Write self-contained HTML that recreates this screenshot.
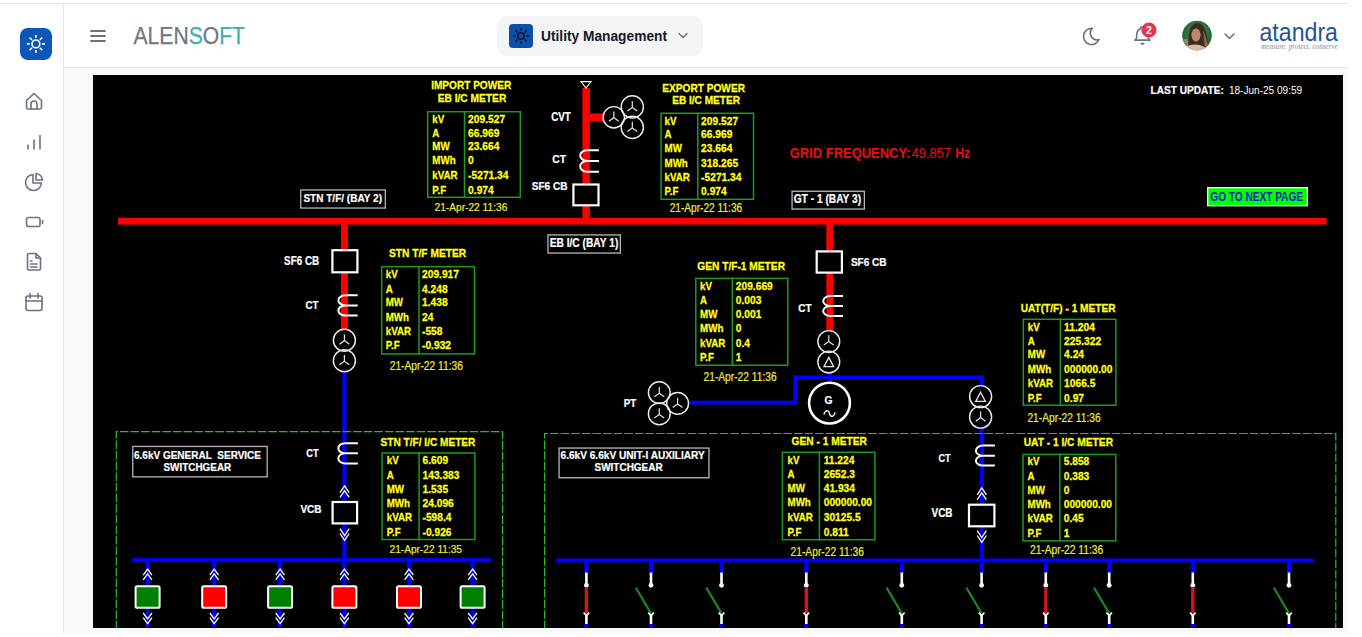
<!DOCTYPE html>
<html><head><meta charset="utf-8"><title>Utility Management</title>
<style>
html,body{margin:0;padding:0;background:#fff;}
body{width:1362px;height:637px;overflow:hidden;position:relative;font-family:"Liberation Sans", sans-serif;}
.abs{position:absolute;}
svg text{font-family:"Liberation Sans", sans-serif;}
</style></head>
<body>
<div class="abs" style="left:0;top:3px;width:1349px;height:630px;background:#f8f9fb;"></div>
<div class="abs" style="left:0;top:3px;width:1349px;height:1px;background:#e3e5e8;"></div>
<div class="abs" style="left:0;top:4px;width:63px;height:629px;background:#fff;"></div>
<div class="abs" style="left:63px;top:4px;width:1px;height:629px;background:#e5e7eb;"></div>
<div class="abs" style="left:64px;top:4px;width:1285px;height:63px;background:#fff;"></div>
<div class="abs" style="left:64px;top:67px;width:1285px;height:1px;background:#e5e7eb;"></div>
<svg class="abs" style="left:0;top:0" width="1362" height="637" viewBox="0 0 1362 637">

<g fill="none" stroke="#6b7280" stroke-width="1.6" stroke-linecap="round" stroke-linejoin="round">
 <!-- home -->
 <path d="M26.5,100.5 L34,93.5 L41.5,100.5 V107 A2,2 0 0 1 39.5,109 H28.5 A2,2 0 0 1 26.5,107 Z"/>
 <path d="M31,109 V104 A3,3 0 0 1 37,104 V109"/>
 <!-- bars -->
 <path d="M28,149 V145 M34,149 V140 M40,149 V135.5"/>
 <!-- pie -->
 <path d="M33,174.5 A8,8 0 1 0 41.5,183 H33 Z"/>
 <path d="M36,173.5 A7.5,7.5 0 0 1 42.5,180 H36 Z"/>
 <!-- battery -->
 <rect x="26.5" y="217.5" width="13.5" height="9" rx="2"/>
 <path d="M42.5,220.5 V223.5"/>
 <!-- doc -->
 <path d="M29,253.5 H36 L40.5,258 V268.5 A1.5,1.5 0 0 1 39,270 H29 A1.5,1.5 0 0 1 27.5,268.5 V255 A1.5,1.5 0 0 1 29,253.5 Z"/>
 <path d="M36,253.5 V258 H40.5 M30.5,261 H32 M30.5,264 H37 M30.5,267 H37"/>
 <!-- calendar -->
 <rect x="26" y="296" width="16" height="14.5" rx="2"/>
 <path d="M30,293.5 V298 M38,293.5 V298 M26,301 H42"/>
</g>

<g fill="none" stroke="#6b7280" stroke-width="1.8" stroke-linecap="round">
 <path d="M91,31 H105 M91,36 H105 M91,41 H105"/>
</g>
<!-- sidebar blue sun button -->
<rect x="20" y="28" width="32" height="32" rx="8" fill="#0b57b8"/>
<g fill="none" stroke="#fff" stroke-width="1.6" stroke-linecap="butt">
 <circle cx="35.9" cy="43.9" r="3.9"/>
 <path d="M42.10,43.90 L44.90,43.90 M39.86,47.86 L42.19,50.19 M35.90,50.10 L35.90,52.90 M31.94,47.86 L29.61,50.19 M29.70,43.90 L26.90,43.90 M31.94,39.94 L29.61,37.61 M35.90,37.70 L35.90,34.90 M39.86,39.94 L42.19,37.61 "/>
</g>
<!-- utility pill -->
<rect x="497" y="16" width="206" height="40" rx="10" fill="#f3f4f6"/>
<rect x="509" y="24" width="24" height="24" rx="4" fill="#0b4fa8"/>
<g fill="none" stroke="#111827" stroke-width="1.5" stroke-linecap="butt">
 <circle cx="521" cy="36" r="3.3"/>
 <path d="M526.40,36.00 L529.00,36.00 M524.54,39.54 L526.59,41.59 M521.00,41.40 L521.00,44.00 M517.46,39.54 L515.41,41.59 M515.60,36.00 L513.00,36.00 M517.46,32.46 L515.41,30.41 M521.00,30.60 L521.00,28.00 M524.54,32.46 L526.59,30.41 "/>
</g>
<path d="M679,33.5 L683,37.5 L687,33.5" fill="none" stroke="#6b7280" stroke-width="1.5" stroke-linecap="round" stroke-linejoin="round"/>
<!-- moon -->
<g transform="translate(1081.2,25.6) scale(0.9)" fill="none" stroke="#6b7280" stroke-width="1.8" stroke-linecap="round" stroke-linejoin="round">
 <path d="M12 3c.132 0 .263 0 .393 0a7.5 7.5 0 0 0 7.493 12.5a9 9 0 1 1 -7.886 -12.5z"/>
</g>
<!-- bell -->
<g transform="translate(1131,23.95) scale(0.95)" fill="none" stroke="#6b7280" stroke-width="1.7" stroke-linecap="round" stroke-linejoin="round">
 <path d="M10 5a2 2 0 1 1 4 0a7 7 0 0 1 4 6v3a4 4 0 0 0 2 3h-16a4 4 0 0 0 2 -3v-3a7 7 0 0 1 4 -6"/>
 <path d="M10.6 20.4q1.4 1.4 2.8 0"/>
</g>
<circle cx="1149" cy="30" r="7.6" fill="#e5344e"/>
<text x="1149" y="33.8" font-size="10.5" font-weight="bold" fill="#fff" text-anchor="middle">2</text>
<!-- avatar -->
<defs>
 <clipPath id="av"><circle cx="1197" cy="35.6" r="14.8"/></clipPath>
 <radialGradient id="avbg" cx="0.5" cy="0.45" r="0.6"><stop offset="0" stop-color="#4a9a50"/><stop offset="1" stop-color="#1d5a28"/></radialGradient>
 <filter id="avb" x="-10%" y="-10%" width="120%" height="120%"><feGaussianBlur stdDeviation="0.7"/></filter>
</defs>
<g clip-path="url(#av)">
 <rect x="1182" y="20" width="30" height="31" fill="url(#avbg)"/>
 <g filter="url(#avb)">
  <ellipse cx="1186" cy="44" rx="6" ry="5" fill="#8a8a60"/>
  <path d="M1188.5,50 C1188,38 1188,24 1197,23 C1206,23 1207,36 1209,48 L1204,52 L1190,52 Z" fill="#3d2b22"/>
  <path d="M1203,30 C1206,36 1207,43 1209,47 L1205,49 Z" fill="#8a6a48"/>
  <ellipse cx="1196" cy="35" rx="4.6" ry="6.4" fill="#b88a70"/>
  <ellipse cx="1195" cy="51" rx="12" ry="6.5" fill="#d8b8a6"/>
 </g>
</g>
<path d="M1225,34 L1229.5,38.5 L1234,34" fill="none" stroke="#6b7280" stroke-width="1.6" stroke-linecap="round" stroke-linejoin="round"/>
<!-- atandra -->
<text x="1259.5" y="40.8" font-size="26.5" fill="#1f5596" textLength="78.5" lengthAdjust="spacingAndGlyphs">atandra</text>
<text x="1261" y="49.2" style="font-family:'Liberation Serif', serif" font-style="italic" font-size="8" fill="#8a8a8a" textLength="77" lengthAdjust="spacingAndGlyphs">measure. protect. conserve</text>
<!-- ALENSOFT -->
<text x="133.5" y="44.2" font-size="23" fill="#6f7780" stroke="#6f7780" stroke-width="0.25" textLength="111.5" lengthAdjust="spacingAndGlyphs">ALEN<tspan fill="#36b2ae" stroke="#36b2ae">S</tspan><tspan fill="#6f7780" stroke="#6f7780">O</tspan><tspan fill="#36b2ae" stroke="#36b2ae">FT</tspan></text>
<!-- Utility Management -->
<text x="541" y="41.3" font-size="14.6" font-weight="bold" fill="#111827" textLength="126" lengthAdjust="spacingAndGlyphs">Utility Management</text>

<defs><clipPath id="dg"><rect x="93" y="75" width="1250" height="553"/></clipPath></defs><g clip-path="url(#dg)">
<rect x="93" y="75" width="1250" height="553" fill="#000"/>
<rect x="118" y="217.8" width="1208.5" height="6.8" fill="#ff0000"/>
<rect x="582.4" y="88" width="7.5" height="131" fill="#ff0000"/>
<rect x="589" y="113.4" width="14" height="7.799999999999997" fill="#ff0000"/>
<path d="M581,81.6 H591 L586,88.2 Z" fill="none" stroke="#fff" stroke-width="1.1"/>
<circle cx="613.8" cy="117.3" r="10.7" fill="none" stroke="#ececec" stroke-width="1.4"/>
<circle cx="632.3" cy="106.9" r="11.1" fill="none" stroke="#ececec" stroke-width="1.4"/>
<circle cx="632.3" cy="127.4" r="11.1" fill="none" stroke="#ececec" stroke-width="1.4"/>
<path d="M613.8,111.40 V117.6 L608.90,121.20 M613.8,117.6 L618.70,121.20" fill="none" stroke="#e6e6e6" stroke-width="1.2"/>
<path d="M632.3,101.20 V107.4 L627.40,111.00 M632.3,107.4 L637.20,111.00" fill="none" stroke="#e6e6e6" stroke-width="1.2"/>
<path d="M632.3,121.80 V128.0 L627.40,131.60 M632.3,128.0 L637.20,131.60" fill="none" stroke="#e6e6e6" stroke-width="1.2"/>
<path d="M599,150.2 H587.20 A7.00,5.35 0 0 0 587.20,160.9 H599 M587.20,160.9 A7.00,5.45 0 0 0 587.20,171.8 H599" fill="none" stroke="#fff" stroke-width="2.0"/>
<rect x="573.40" y="184.50" width="25.10" height="20.80" fill="#000" stroke="#fff" stroke-width="2.2" rx="0"/>
<text x="551.2" y="121.3" font-size="12.06" font-weight="bold" stroke="#ffffff" stroke-width="0.22" fill="#ffffff" textLength="19.6" lengthAdjust="spacingAndGlyphs">CVT</text>
<text x="552.2" y="162.9" font-size="11.63" font-weight="bold" stroke="#ffffff" stroke-width="0.22" fill="#ffffff" textLength="13.8" lengthAdjust="spacingAndGlyphs">CT</text>
<text x="531.7" y="190.4" font-size="10.61" font-weight="bold" stroke="#ffffff" stroke-width="0.22" fill="#ffffff" textLength="35.7" lengthAdjust="spacingAndGlyphs">SF6 CB</text>
<rect x="341" y="224" width="7" height="106" fill="#ff0000"/>
<rect x="332.40" y="250.20" width="25.00" height="22.10" fill="#000" stroke="#fff" stroke-width="2.2" rx="0"/>
<path d="M357.7,295.2 H345.40 A7.00,5.10 0 0 0 345.40,305.4 H357.7 M345.40,305.4 A7.00,5.10 0 0 0 345.40,315.6 H357.7" fill="none" stroke="#fff" stroke-width="2.0"/>
<rect x="342.30" y="371" width="4.2" height="189" fill="#0000ff"/>
<circle cx="344.4" cy="340.2" r="11" fill="none" stroke="#ececec" stroke-width="1.45"/>
<circle cx="344.4" cy="360.8" r="11" fill="none" stroke="#ececec" stroke-width="1.45"/>
<path d="M344.4,334.40 V340.6 L339.50,344.20 M344.4,340.6 L349.30,344.20" fill="none" stroke="#e6e6e6" stroke-width="1.2"/>
<path d="M344.4,355.00 V361.2 L339.50,364.80 M344.4,361.2 L349.30,364.80" fill="none" stroke="#e6e6e6" stroke-width="1.2"/>
<text x="284.1" y="264.8" font-size="12.06" font-weight="bold" stroke="#ffffff" stroke-width="0.22" fill="#ffffff" textLength="35.1" lengthAdjust="spacingAndGlyphs">SF6 CB</text>
<text x="305.4" y="308.9" font-size="11.77" font-weight="bold" stroke="#ffffff" stroke-width="0.22" fill="#ffffff" textLength="13.1" lengthAdjust="spacingAndGlyphs">CT</text>
<path d="M357.9,443.2 H345.30 A7.00,5.05 0 0 0 345.30,453.3 H357.9 M345.30,453.3 A7.00,5.10 0 0 0 345.30,463.5 H357.9" fill="none" stroke="#fff" stroke-width="2.0"/>
<path d="M340.00,492.60 L344.6,485.80 L349.20,492.60 M340.00,497.40 L344.6,490.60 L349.20,497.40 " fill="none" stroke="#fff" stroke-width="1.3"/>
<rect x="332.60" y="502.00" width="24.50" height="21.40" fill="#000" stroke="#fff" stroke-width="2.2" rx="0"/>
<path d="M340.00,533.50 L344.6,540.30 L349.20,533.50 M340.00,528.70 L344.6,535.50 L349.20,528.70 " fill="none" stroke="#fff" stroke-width="1.3"/>
<text x="306.2" y="457.1" font-size="10.76" font-weight="bold" stroke="#ffffff" stroke-width="0.22" fill="#ffffff" textLength="12.4" lengthAdjust="spacingAndGlyphs">CT</text>
<text x="300.4" y="513.2" font-size="11.19" font-weight="bold" stroke="#ffffff" stroke-width="0.22" fill="#ffffff" textLength="21.2" lengthAdjust="spacingAndGlyphs">VCB</text>
<rect x="826.4" y="224" width="6.800000000000068" height="106.5" fill="#ff0000"/>
<rect x="816.70" y="251.40" width="25.20" height="21.20" fill="#000" stroke="#fff" stroke-width="2.2" rx="0"/>
<path d="M843,296.1 H830.20 A7.00,4.95 0 0 0 830.20,306 H843 M830.20,306 A7.00,5.00 0 0 0 830.20,316 H843" fill="none" stroke="#fff" stroke-width="2.0"/>
<rect x="827.60" y="372" width="4.2" height="10" fill="#0000ff"/>
<circle cx="828.8" cy="341.5" r="10.9" fill="none" stroke="#ececec" stroke-width="1.45"/>
<circle cx="828.8" cy="362" r="10.9" fill="none" stroke="#ececec" stroke-width="1.45"/>
<path d="M828.8,335.20 V341.4 L823.90,345.00 M828.8,341.4 L833.70,345.00" fill="none" stroke="#e6e6e6" stroke-width="1.2"/>
<path d="M828.8,357.40 L833.60,366.60 H824.00 Z" fill="none" stroke="#e6e6e6" stroke-width="1.3" stroke-linejoin="miter"/>
<text x="850.9" y="265.9" font-size="11.77" font-weight="bold" stroke="#ffffff" stroke-width="0.22" fill="#ffffff" textLength="35.6" lengthAdjust="spacingAndGlyphs">SF6 CB</text>
<text x="798.3" y="312.2" font-size="10.76" font-weight="bold" stroke="#ffffff" stroke-width="0.22" fill="#ffffff" textLength="13.4" lengthAdjust="spacingAndGlyphs">CT</text>
<rect x="793.5" y="375.40" width="190.29999999999995" height="3.8" fill="#0000ff"/>
<rect x="793.4" y="375.4" width="3.6" height="29" fill="#0000ff"/>
<rect x="688.5" y="400.70" width="108.5" height="3.8" fill="#0000ff"/>
<circle cx="829.5" cy="403.1" r="20.4" fill="none" stroke="#fff" stroke-width="2.6"/>
<text x="824.5" y="403.6" font-size="11.34" font-weight="bold" stroke="#ffffff" stroke-width="0.22" fill="#ffffff" textLength="8.0" lengthAdjust="spacingAndGlyphs">G</text>
<path d="M823.8,414.5 C825.5,409.5 828.5,409.5 829.5,413.5 C830.5,417.5 833.5,417.5 835.2,412.5" fill="none" stroke="#fff" stroke-width="1.3"/>
<circle cx="659.3" cy="392.6" r="10.9" fill="none" stroke="#ececec" stroke-width="1.45"/>
<circle cx="659.3" cy="413.8" r="10.9" fill="none" stroke="#ececec" stroke-width="1.45"/>
<circle cx="677.6" cy="403.4" r="10.9" fill="none" stroke="#ececec" stroke-width="1.45"/>
<path d="M659.3,387.00 V393.2 L654.40,396.80 M659.3,393.2 L664.20,396.80" fill="none" stroke="#e6e6e6" stroke-width="1.2"/>
<path d="M659.3,408.20 V414.4 L654.40,418.00 M659.3,414.4 L664.20,418.00" fill="none" stroke="#e6e6e6" stroke-width="1.2"/>
<path d="M677.6,397.80 V404.0 L672.70,407.60 M677.6,404.0 L682.50,407.60" fill="none" stroke="#e6e6e6" stroke-width="1.2"/>
<text x="623.7" y="407.3" font-size="11.63" font-weight="bold" stroke="#ffffff" stroke-width="0.22" fill="#ffffff" textLength="12.5" lengthAdjust="spacingAndGlyphs">PT</text>
<rect x="979.70" y="377" width="4.2" height="9" fill="#0000ff"/>
<rect x="979.70" y="427.5" width="4.2" height="145.5" fill="#0000ff"/>
<circle cx="980.6" cy="396.6" r="11" fill="none" stroke="#ececec" stroke-width="1.45"/>
<circle cx="980.6" cy="417.1" r="11" fill="none" stroke="#ececec" stroke-width="1.45"/>
<path d="M980.6,392.20 L985.40,401.40 H975.80 Z" fill="none" stroke="#e6e6e6" stroke-width="1.3" stroke-linejoin="miter"/>
<path d="M980.6,411.40 V417.6 L975.70,421.20 M980.6,417.6 L985.50,421.20" fill="none" stroke="#e6e6e6" stroke-width="1.2"/>
<path d="M994.9,445.6 H982.90 A7.00,5.10 0 0 0 982.90,455.8 H994.9 M982.90,455.8 A7.00,4.90 0 0 0 982.90,465.6 H994.9" fill="none" stroke="#fff" stroke-width="2.0"/>
<path d="M977.20,494.80 L981.8,488.00 L986.40,494.80 M977.20,499.60 L981.8,492.80 L986.40,499.60 " fill="none" stroke="#fff" stroke-width="1.3"/>
<rect x="969.00" y="504.70" width="25.40" height="21.60" fill="#000" stroke="#fff" stroke-width="2.2" rx="0"/>
<path d="M977.20,535.50 L981.8,542.30 L986.40,535.50 M977.20,530.70 L981.8,537.50 L986.40,530.70 " fill="none" stroke="#fff" stroke-width="1.3"/>
<text x="938.4" y="461.7" font-size="11.48" font-weight="bold" stroke="#ffffff" stroke-width="0.22" fill="#ffffff" textLength="12.2" lengthAdjust="spacingAndGlyphs">CT</text>
<text x="931.5" y="517.1" font-size="12.06" font-weight="bold" stroke="#ffffff" stroke-width="0.22" fill="#ffffff" textLength="21.0" lengthAdjust="spacingAndGlyphs">VCB</text>
<path d="M116.3,640 V431.6 H502.6 V640" fill="none" stroke="#22c222" stroke-width="1.2" stroke-dasharray="8.6,2.0"/>
<path d="M544.6,640 V433.5 H1335.8 V640" fill="none" stroke="#22c222" stroke-width="1.2" stroke-dasharray="8.6,2.0"/>
<rect x="132" y="558.10" width="359" height="4.0" fill="#0000ff"/>
<rect x="145.50" y="560" width="4.2" height="68" fill="#0000ff"/>
<path d="M143.20,575.20 L147.6,569.20 L152.00,575.20 M143.20,579.80 L147.6,573.80 L152.00,579.80 " fill="none" stroke="#fff" stroke-width="1.3"/>
<rect x="135.60" y="586.2" width="24.0" height="21.6" rx="1.6" fill="#008000" stroke="#fff" stroke-width="2.0"/>
<path d="M143.20,617.60 L147.6,623.60 L152.00,617.60 M143.20,613.00 L147.6,619.00 L152.00,613.00 " fill="none" stroke="#fff" stroke-width="1.3"/>
<rect x="212.10" y="560" width="4.2" height="68" fill="#0000ff"/>
<path d="M209.80,575.20 L214.2,569.20 L218.60,575.20 M209.80,579.80 L214.2,573.80 L218.60,579.80 " fill="none" stroke="#fff" stroke-width="1.3"/>
<rect x="202.20" y="586.2" width="24.0" height="21.6" rx="1.6" fill="#ff0000" stroke="#fff" stroke-width="2.0"/>
<path d="M209.80,617.60 L214.2,623.60 L218.60,617.60 M209.80,613.00 L214.2,619.00 L218.60,613.00 " fill="none" stroke="#fff" stroke-width="1.3"/>
<rect x="278.00" y="560" width="4.2" height="68" fill="#0000ff"/>
<path d="M275.70,575.20 L280.1,569.20 L284.50,575.20 M275.70,579.80 L280.1,573.80 L284.50,579.80 " fill="none" stroke="#fff" stroke-width="1.3"/>
<rect x="268.10" y="586.2" width="24.0" height="21.6" rx="1.6" fill="#008000" stroke="#fff" stroke-width="2.0"/>
<path d="M275.70,617.60 L280.1,623.60 L284.50,617.60 M275.70,613.00 L280.1,619.00 L284.50,613.00 " fill="none" stroke="#fff" stroke-width="1.3"/>
<rect x="342.30" y="560" width="4.2" height="68" fill="#0000ff"/>
<path d="M340.00,575.20 L344.4,569.20 L348.80,575.20 M340.00,579.80 L344.4,573.80 L348.80,579.80 " fill="none" stroke="#fff" stroke-width="1.3"/>
<rect x="332.40" y="586.2" width="24.0" height="21.6" rx="1.6" fill="#ff0000" stroke="#fff" stroke-width="2.0"/>
<path d="M340.00,617.60 L344.4,623.60 L348.80,617.60 M340.00,613.00 L344.4,619.00 L348.80,613.00 " fill="none" stroke="#fff" stroke-width="1.3"/>
<rect x="406.90" y="560" width="4.2" height="68" fill="#0000ff"/>
<path d="M404.60,575.20 L409,569.20 L413.40,575.20 M404.60,579.80 L409,573.80 L413.40,579.80 " fill="none" stroke="#fff" stroke-width="1.3"/>
<rect x="397.00" y="586.2" width="24.0" height="21.6" rx="1.6" fill="#ff0000" stroke="#fff" stroke-width="2.0"/>
<path d="M404.60,617.60 L409,623.60 L413.40,617.60 M404.60,613.00 L409,619.00 L413.40,613.00 " fill="none" stroke="#fff" stroke-width="1.3"/>
<rect x="470.50" y="560" width="4.2" height="68" fill="#0000ff"/>
<path d="M468.20,575.20 L472.6,569.20 L477.00,575.20 M468.20,579.80 L472.6,573.80 L477.00,579.80 " fill="none" stroke="#fff" stroke-width="1.3"/>
<rect x="460.60" y="586.2" width="24.0" height="21.6" rx="1.6" fill="#008000" stroke="#fff" stroke-width="2.0"/>
<path d="M468.20,617.60 L472.6,623.60 L477.00,617.60 M468.20,613.00 L472.6,619.00 L477.00,613.00 " fill="none" stroke="#fff" stroke-width="1.3"/>
<rect x="555.7" y="558.45" width="758.5" height="3.9" fill="#0000ff"/>
<rect x="584.30" y="560" width="4.2" height="13" fill="#0000ff"/>
<rect x="585.10" y="572.5" width="2.6" height="12.5" fill="#fff"/>
<circle cx="586.4" cy="585.3" r="2.4" fill="#fff"/>
<rect x="584.70" y="587" width="3.4" height="26.5" fill="#d01818"/>
<path d="M583.60,612.6 L586.4,615.6 L589.20,612.6" fill="none" stroke="#fff" stroke-width="1.6"/>
<rect x="585.10" y="614.6" width="2.6" height="9.6" fill="#fff"/>
<rect x="584.30" y="624" width="4.2" height="4" fill="#0000ff"/>
<rect x="648.90" y="560" width="4.2" height="13" fill="#0000ff"/>
<rect x="649.70" y="572.5" width="2.6" height="12.5" fill="#fff"/>
<circle cx="651" cy="585.3" r="2.4" fill="#fff"/>
<line x1="635.80" y1="587.6" x2="651.00" y2="613.4" stroke="#1a8a1a" stroke-width="2.1"/>
<path d="M648.20,612.6 L651,615.6 L653.80,612.6" fill="none" stroke="#fff" stroke-width="1.6"/>
<rect x="649.70" y="614.6" width="2.6" height="9.6" fill="#fff"/>
<rect x="648.90" y="624" width="4.2" height="4" fill="#0000ff"/>
<rect x="719.40" y="560" width="4.2" height="13" fill="#0000ff"/>
<rect x="720.20" y="572.5" width="2.6" height="12.5" fill="#fff"/>
<circle cx="721.5" cy="585.3" r="2.4" fill="#fff"/>
<line x1="706.30" y1="587.6" x2="721.50" y2="613.4" stroke="#1a8a1a" stroke-width="2.1"/>
<path d="M718.70,612.6 L721.5,615.6 L724.30,612.6" fill="none" stroke="#fff" stroke-width="1.6"/>
<rect x="720.20" y="614.6" width="2.6" height="9.6" fill="#fff"/>
<rect x="719.40" y="624" width="4.2" height="4" fill="#0000ff"/>
<rect x="804.20" y="560" width="4.2" height="13" fill="#0000ff"/>
<rect x="805.00" y="572.5" width="2.6" height="12.5" fill="#fff"/>
<circle cx="806.3" cy="585.3" r="2.4" fill="#fff"/>
<rect x="804.60" y="587" width="3.4" height="26.5" fill="#d01818"/>
<path d="M803.50,612.6 L806.3,615.6 L809.10,612.6" fill="none" stroke="#fff" stroke-width="1.6"/>
<rect x="805.00" y="614.6" width="2.6" height="9.6" fill="#fff"/>
<rect x="804.20" y="624" width="4.2" height="4" fill="#0000ff"/>
<rect x="899.70" y="560" width="4.2" height="13" fill="#0000ff"/>
<rect x="900.50" y="572.5" width="2.6" height="12.5" fill="#fff"/>
<circle cx="901.8" cy="585.3" r="2.4" fill="#fff"/>
<line x1="886.60" y1="587.6" x2="901.80" y2="613.4" stroke="#1a8a1a" stroke-width="2.1"/>
<path d="M899.00,612.6 L901.8,615.6 L904.60,612.6" fill="none" stroke="#fff" stroke-width="1.6"/>
<rect x="900.50" y="614.6" width="2.6" height="9.6" fill="#fff"/>
<rect x="899.70" y="624" width="4.2" height="4" fill="#0000ff"/>
<rect x="1043.70" y="560" width="4.2" height="13" fill="#0000ff"/>
<rect x="1044.50" y="572.5" width="2.6" height="12.5" fill="#fff"/>
<circle cx="1045.8" cy="585.3" r="2.4" fill="#fff"/>
<rect x="1044.10" y="587" width="3.4" height="26.5" fill="#d01818"/>
<path d="M1043.00,612.6 L1045.8,615.6 L1048.60,612.6" fill="none" stroke="#fff" stroke-width="1.6"/>
<rect x="1044.50" y="614.6" width="2.6" height="9.6" fill="#fff"/>
<rect x="1043.70" y="624" width="4.2" height="4" fill="#0000ff"/>
<rect x="1107.10" y="560" width="4.2" height="13" fill="#0000ff"/>
<rect x="1107.90" y="572.5" width="2.6" height="12.5" fill="#fff"/>
<circle cx="1109.2" cy="585.3" r="2.4" fill="#fff"/>
<line x1="1094.00" y1="587.6" x2="1109.20" y2="613.4" stroke="#1a8a1a" stroke-width="2.1"/>
<path d="M1106.40,612.6 L1109.2,615.6 L1112.00,612.6" fill="none" stroke="#fff" stroke-width="1.6"/>
<rect x="1107.90" y="614.6" width="2.6" height="9.6" fill="#fff"/>
<rect x="1107.10" y="624" width="4.2" height="4" fill="#0000ff"/>
<rect x="1190.70" y="560" width="4.2" height="13" fill="#0000ff"/>
<rect x="1191.50" y="572.5" width="2.6" height="12.5" fill="#fff"/>
<circle cx="1192.8" cy="585.3" r="2.4" fill="#fff"/>
<rect x="1191.10" y="587" width="3.4" height="26.5" fill="#d01818"/>
<path d="M1190.00,612.6 L1192.8,615.6 L1195.60,612.6" fill="none" stroke="#fff" stroke-width="1.6"/>
<rect x="1191.50" y="614.6" width="2.6" height="9.6" fill="#fff"/>
<rect x="1190.70" y="624" width="4.2" height="4" fill="#0000ff"/>
<rect x="1286.90" y="560" width="4.2" height="13" fill="#0000ff"/>
<rect x="1287.70" y="572.5" width="2.6" height="12.5" fill="#fff"/>
<circle cx="1289" cy="585.3" r="2.4" fill="#fff"/>
<line x1="1273.80" y1="587.6" x2="1289.00" y2="613.4" stroke="#1a8a1a" stroke-width="2.1"/>
<path d="M1286.20,612.6 L1289,615.6 L1291.80,612.6" fill="none" stroke="#fff" stroke-width="1.6"/>
<rect x="1287.70" y="614.6" width="2.6" height="9.6" fill="#fff"/>
<rect x="1286.90" y="624" width="4.2" height="4" fill="#0000ff"/>
<rect x="979.50" y="560" width="4.2" height="13" fill="#0000ff"/>
<rect x="980.30" y="572.5" width="2.6" height="12.5" fill="#fff"/>
<circle cx="981.6" cy="585.3" r="2.4" fill="#fff"/>
<line x1="966.40" y1="587.6" x2="981.60" y2="613.4" stroke="#1a8a1a" stroke-width="2.1"/>
<path d="M978.80,612.6 L981.6,615.6 L984.40,612.6" fill="none" stroke="#fff" stroke-width="1.6"/>
<rect x="980.30" y="614.6" width="2.6" height="9.6" fill="#fff"/>
<rect x="979.50" y="624" width="4.2" height="4" fill="#0000ff"/>
<rect x="300.75" y="189.95" width="84.60" height="18.10" fill="#000" stroke="#b8b8b8" stroke-width="1.3"/>
<text x="303.4" y="202.2" font-size="11.63" font-weight="bold" stroke="#ffffff" stroke-width="0.22" fill="#ffffff" textLength="78.6" lengthAdjust="spacingAndGlyphs">STN T/F/ (BAY 2)</text>
<rect x="547.95" y="234.95" width="72.40" height="18.10" fill="#000" stroke="#b8b8b8" stroke-width="1.3"/>
<text x="549.7" y="247.4" font-size="12.21" font-weight="bold" stroke="#ffffff" stroke-width="0.22" fill="#ffffff" textLength="68.6" lengthAdjust="spacingAndGlyphs">EB I/C (BAY 1)</text>
<rect x="792.05" y="191.25" width="72.30" height="17.80" fill="#000" stroke="#b8b8b8" stroke-width="1.3"/>
<text x="793.7" y="203.1" font-size="12.06" font-weight="bold" stroke="#ffffff" stroke-width="0.22" fill="#ffffff" textLength="67.4" lengthAdjust="spacingAndGlyphs">GT - 1 (BAY 3)</text>
<rect x="1207.65" y="187.65" width="99.70" height="18.10" fill="#00ff00" stroke="#e8ffe8" stroke-width="1.3"/>
<text x="1210.3" y="201.3" font-size="12.35" font-weight="bold" fill="#0018c8" textLength="92.7" lengthAdjust="spacingAndGlyphs">GO TO NEXT PAGE</text>
<rect x="132.75" y="446.45" width="134.40" height="30.40" fill="#000" stroke="#b8b8b8" stroke-width="1.3"/>
<text x="134.0" y="458.6" font-size="11.77" font-weight="bold" stroke="#ffffff" stroke-width="0.22" fill="#ffffff" textLength="127.0" lengthAdjust="spacingAndGlyphs">6.6kV GENERAL&#160; SERVICE</text>
<text x="163.5" y="470.5" font-size="11.34" font-weight="bold" stroke="#ffffff" stroke-width="0.22" fill="#ffffff" textLength="67.7" lengthAdjust="spacingAndGlyphs">SWITCHGEAR</text>
<rect x="559.05" y="448.05" width="149.90" height="29.70" fill="#000" stroke="#b8b8b8" stroke-width="1.3"/>
<text x="560.5" y="459.0" font-size="11.05" font-weight="bold" stroke="#ffffff" stroke-width="0.22" fill="#ffffff" textLength="144.3" lengthAdjust="spacingAndGlyphs">6.6kV 6.6kV UNIT-I AUXILIARY</text>
<text x="594.5" y="471.2" font-size="11.48" font-weight="bold" stroke="#ffffff" stroke-width="0.22" fill="#ffffff" textLength="68.2" lengthAdjust="spacingAndGlyphs">SWITCHGEAR</text>
<text x="1150.5" y="94.4" font-size="11.77" font-weight="bold" stroke="#ffffff" stroke-width="0.22" fill="#ffffff" textLength="73.4" lengthAdjust="spacingAndGlyphs">LAST UPDATE:</text>
<text x="1228.9" y="94.4" font-size="11.77" fill="#ffffff" textLength="73.3" lengthAdjust="spacingAndGlyphs">18-Jun-25 09:59</text>
<text x="789.7" y="158.1" font-size="14.68" font-weight="bold" fill="#e81010" textLength="120.8" lengthAdjust="spacingAndGlyphs">GRID FREQUENCY:</text>
<text x="911.7" y="158.1" font-size="14.68" fill="#e81010" textLength="39.3" lengthAdjust="spacingAndGlyphs">49.857</text>
<text x="955.2" y="158.1" font-size="14.68" font-weight="bold" fill="#e81010" textLength="15.0" lengthAdjust="spacingAndGlyphs">Hz</text>
<text x="431.2" y="89.4" font-size="11.48" font-weight="bold" stroke="#ffff1a" stroke-width="0.3" fill="#ffff1a" textLength="80.0" lengthAdjust="spacingAndGlyphs">IMPORT POWER</text>
<text x="437.7" y="101.5" font-size="11.19" font-weight="bold" stroke="#ffff1a" stroke-width="0.3" fill="#ffff1a" textLength="68.6" lengthAdjust="spacingAndGlyphs">EB I/C METER</text>
<rect x="427.7" y="111.7" width="92.6" height="85.6" fill="none" stroke="#1c9c1c" stroke-width="1.5"/>
<line x1="464.5" y1="111" x2="464.5" y2="198" stroke="#1c9c1c" stroke-width="1.5"/>
<text transform="translate(432.3,123.0) scale(0.835,1)" font-size="11.7" font-weight="bold" stroke="#ffff1a" stroke-width="0.3" fill="#ffff1a">kV</text>
<text transform="translate(468.1,123.0) scale(0.875,1)" font-size="11.7" font-weight="bold" stroke="#ffff1a" stroke-width="0.3" fill="#ffff1a">209.527</text>
<text transform="translate(432.3,136.6) scale(0.835,1)" font-size="11.7" font-weight="bold" stroke="#ffff1a" stroke-width="0.3" fill="#ffff1a">A</text>
<text transform="translate(468.1,136.6) scale(0.875,1)" font-size="11.7" font-weight="bold" stroke="#ffff1a" stroke-width="0.3" fill="#ffff1a">66.969</text>
<text transform="translate(432.3,150.3) scale(0.835,1)" font-size="11.7" font-weight="bold" stroke="#ffff1a" stroke-width="0.3" fill="#ffff1a">MW</text>
<text transform="translate(468.1,150.3) scale(0.875,1)" font-size="11.7" font-weight="bold" stroke="#ffff1a" stroke-width="0.3" fill="#ffff1a">23.664</text>
<text transform="translate(432.3,164.1) scale(0.835,1)" font-size="11.7" font-weight="bold" stroke="#ffff1a" stroke-width="0.3" fill="#ffff1a">MWh</text>
<text transform="translate(468.1,164.1) scale(0.875,1)" font-size="11.7" font-weight="bold" stroke="#ffff1a" stroke-width="0.3" fill="#ffff1a">0</text>
<text transform="translate(432.3,179.2) scale(0.835,1)" font-size="11.7" font-weight="bold" stroke="#ffff1a" stroke-width="0.3" fill="#ffff1a">kVAR</text>
<text transform="translate(468.1,179.2) scale(0.875,1)" font-size="11.7" font-weight="bold" stroke="#ffff1a" stroke-width="0.3" fill="#ffff1a">-5271.34</text>
<text transform="translate(432.3,193.9) scale(0.835,1)" font-size="11.7" font-weight="bold" stroke="#ffff1a" stroke-width="0.3" fill="#ffff1a">P.F</text>
<text transform="translate(468.1,193.9) scale(0.875,1)" font-size="11.7" font-weight="bold" stroke="#ffff1a" stroke-width="0.3" fill="#ffff1a">0.974</text>
<text x="434.5" y="211.2" font-size="11.19" stroke="#eded3a" stroke-width="0.2" fill="#eded3a" textLength="72.8" lengthAdjust="spacingAndGlyphs">21-Apr-22 11:36</text>
<text x="662.3" y="92.4" font-size="11.63" font-weight="bold" stroke="#ffff1a" stroke-width="0.3" fill="#ffff1a" textLength="82.7" lengthAdjust="spacingAndGlyphs">EXPORT POWER</text>
<text x="672.2" y="103.7" font-size="10.47" font-weight="bold" stroke="#ffff1a" stroke-width="0.3" fill="#ffff1a" textLength="67.8" lengthAdjust="spacingAndGlyphs">EB I/C METER</text>
<rect x="661.1" y="113.3" width="92.4" height="86.0" fill="none" stroke="#1c9c1c" stroke-width="1.5"/>
<line x1="697.8" y1="112.6" x2="697.8" y2="200" stroke="#1c9c1c" stroke-width="1.5"/>
<text transform="translate(664.5,124.6) scale(0.835,1)" font-size="11.7" font-weight="bold" stroke="#ffff1a" stroke-width="0.3" fill="#ffff1a">kV</text>
<text transform="translate(701.1,124.6) scale(0.875,1)" font-size="11.7" font-weight="bold" stroke="#ffff1a" stroke-width="0.3" fill="#ffff1a">209.527</text>
<text transform="translate(664.5,138.3) scale(0.835,1)" font-size="11.7" font-weight="bold" stroke="#ffff1a" stroke-width="0.3" fill="#ffff1a">A</text>
<text transform="translate(701.1,138.3) scale(0.875,1)" font-size="11.7" font-weight="bold" stroke="#ffff1a" stroke-width="0.3" fill="#ffff1a">66.969</text>
<text transform="translate(664.5,152.1) scale(0.835,1)" font-size="11.7" font-weight="bold" stroke="#ffff1a" stroke-width="0.3" fill="#ffff1a">MW</text>
<text transform="translate(701.1,152.1) scale(0.875,1)" font-size="11.7" font-weight="bold" stroke="#ffff1a" stroke-width="0.3" fill="#ffff1a">23.664</text>
<text transform="translate(664.5,166.6) scale(0.835,1)" font-size="11.7" font-weight="bold" stroke="#ffff1a" stroke-width="0.3" fill="#ffff1a">MWh</text>
<text transform="translate(701.1,166.6) scale(0.875,1)" font-size="11.7" font-weight="bold" stroke="#ffff1a" stroke-width="0.3" fill="#ffff1a">318.265</text>
<text transform="translate(664.5,181.0) scale(0.835,1)" font-size="11.7" font-weight="bold" stroke="#ffff1a" stroke-width="0.3" fill="#ffff1a">kVAR</text>
<text transform="translate(701.1,181.0) scale(0.875,1)" font-size="11.7" font-weight="bold" stroke="#ffff1a" stroke-width="0.3" fill="#ffff1a">-5271.34</text>
<text transform="translate(664.5,195.4) scale(0.835,1)" font-size="11.7" font-weight="bold" stroke="#ffff1a" stroke-width="0.3" fill="#ffff1a">P.F</text>
<text transform="translate(701.1,195.4) scale(0.875,1)" font-size="11.7" font-weight="bold" stroke="#ffff1a" stroke-width="0.3" fill="#ffff1a">0.974</text>
<text x="669.7" y="212.4" font-size="12.06" stroke="#eded3a" stroke-width="0.2" fill="#eded3a" textLength="72.5" lengthAdjust="spacingAndGlyphs">21-Apr-22 11:36</text>
<text x="389.0" y="257.4" font-size="11.63" font-weight="bold" stroke="#ffff1a" stroke-width="0.3" fill="#ffff1a" textLength="77.2" lengthAdjust="spacingAndGlyphs">STN T/F METER</text>
<rect x="381.7" y="266.7" width="92.8" height="87.2" fill="none" stroke="#1c9c1c" stroke-width="1.5"/>
<line x1="419" y1="266" x2="419" y2="354.6" stroke="#1c9c1c" stroke-width="1.5"/>
<text transform="translate(385.7,278.3) scale(0.835,1)" font-size="11.7" font-weight="bold" stroke="#ffff1a" stroke-width="0.3" fill="#ffff1a">kV</text>
<text transform="translate(422.0,278.3) scale(0.875,1)" font-size="11.7" font-weight="bold" stroke="#ffff1a" stroke-width="0.3" fill="#ffff1a">209.917</text>
<text transform="translate(385.7,293.4) scale(0.835,1)" font-size="11.7" font-weight="bold" stroke="#ffff1a" stroke-width="0.3" fill="#ffff1a">A</text>
<text transform="translate(422.0,293.4) scale(0.875,1)" font-size="11.7" font-weight="bold" stroke="#ffff1a" stroke-width="0.3" fill="#ffff1a">4.248</text>
<text transform="translate(385.7,306.4) scale(0.835,1)" font-size="11.7" font-weight="bold" stroke="#ffff1a" stroke-width="0.3" fill="#ffff1a">MW</text>
<text transform="translate(422.0,306.4) scale(0.875,1)" font-size="11.7" font-weight="bold" stroke="#ffff1a" stroke-width="0.3" fill="#ffff1a">1.438</text>
<text transform="translate(385.7,321.0) scale(0.835,1)" font-size="11.7" font-weight="bold" stroke="#ffff1a" stroke-width="0.3" fill="#ffff1a">MWh</text>
<text transform="translate(422.0,321.0) scale(0.875,1)" font-size="11.7" font-weight="bold" stroke="#ffff1a" stroke-width="0.3" fill="#ffff1a">24</text>
<text transform="translate(385.7,334.8) scale(0.835,1)" font-size="11.7" font-weight="bold" stroke="#ffff1a" stroke-width="0.3" fill="#ffff1a">kVAR</text>
<text transform="translate(422.0,334.8) scale(0.875,1)" font-size="11.7" font-weight="bold" stroke="#ffff1a" stroke-width="0.3" fill="#ffff1a">-558</text>
<text transform="translate(385.7,349.2) scale(0.835,1)" font-size="11.7" font-weight="bold" stroke="#ffff1a" stroke-width="0.3" fill="#ffff1a">P.F</text>
<text transform="translate(422.0,349.2) scale(0.875,1)" font-size="11.7" font-weight="bold" stroke="#ffff1a" stroke-width="0.3" fill="#ffff1a">-0.932</text>
<text x="389.7" y="370.0" font-size="12.06" stroke="#eded3a" stroke-width="0.2" fill="#eded3a" textLength="73.3" lengthAdjust="spacingAndGlyphs">21-Apr-22 11:36</text>
<text x="697.3" y="270.2" font-size="10.76" font-weight="bold" stroke="#ffff1a" stroke-width="0.3" fill="#ffff1a" textLength="87.7" lengthAdjust="spacingAndGlyphs">GEN T/F-1 METER</text>
<rect x="695.8000000000001" y="278.4" width="92.0" height="86.8" fill="none" stroke="#1c9c1c" stroke-width="1.5"/>
<line x1="732.3" y1="277.7" x2="732.3" y2="365.9" stroke="#1c9c1c" stroke-width="1.5"/>
<text transform="translate(700.1,290.3) scale(0.835,1)" font-size="11.7" font-weight="bold" stroke="#ffff1a" stroke-width="0.3" fill="#ffff1a">kV</text>
<text transform="translate(735.8,290.3) scale(0.875,1)" font-size="11.7" font-weight="bold" stroke="#ffff1a" stroke-width="0.3" fill="#ffff1a">209.669</text>
<text transform="translate(700.1,304.1) scale(0.835,1)" font-size="11.7" font-weight="bold" stroke="#ffff1a" stroke-width="0.3" fill="#ffff1a">A</text>
<text transform="translate(735.8,304.1) scale(0.875,1)" font-size="11.7" font-weight="bold" stroke="#ffff1a" stroke-width="0.3" fill="#ffff1a">0.003</text>
<text transform="translate(700.1,318.3) scale(0.835,1)" font-size="11.7" font-weight="bold" stroke="#ffff1a" stroke-width="0.3" fill="#ffff1a">MW</text>
<text transform="translate(735.8,318.3) scale(0.875,1)" font-size="11.7" font-weight="bold" stroke="#ffff1a" stroke-width="0.3" fill="#ffff1a">0.001</text>
<text transform="translate(700.1,332.2) scale(0.835,1)" font-size="11.7" font-weight="bold" stroke="#ffff1a" stroke-width="0.3" fill="#ffff1a">MWh</text>
<text transform="translate(735.8,332.2) scale(0.875,1)" font-size="11.7" font-weight="bold" stroke="#ffff1a" stroke-width="0.3" fill="#ffff1a">0</text>
<text transform="translate(700.1,346.6) scale(0.835,1)" font-size="11.7" font-weight="bold" stroke="#ffff1a" stroke-width="0.3" fill="#ffff1a">kVAR</text>
<text transform="translate(735.8,346.6) scale(0.875,1)" font-size="11.7" font-weight="bold" stroke="#ffff1a" stroke-width="0.3" fill="#ffff1a">0.4</text>
<text transform="translate(700.1,361.3) scale(0.835,1)" font-size="11.7" font-weight="bold" stroke="#ffff1a" stroke-width="0.3" fill="#ffff1a">P.F</text>
<text transform="translate(735.8,361.3) scale(0.875,1)" font-size="11.7" font-weight="bold" stroke="#ffff1a" stroke-width="0.3" fill="#ffff1a">1</text>
<text x="703.5" y="380.6" font-size="12.06" stroke="#eded3a" stroke-width="0.2" fill="#eded3a" textLength="73.2" lengthAdjust="spacingAndGlyphs">21-Apr-22 11:36</text>
<text x="1020.7" y="312.0" font-size="11.77" font-weight="bold" stroke="#ffff1a" stroke-width="0.3" fill="#ffff1a" textLength="94.8" lengthAdjust="spacingAndGlyphs">UAT(T/F) - 1 METER</text>
<rect x="1023.3000000000001" y="319.3" width="92.6" height="85.9" fill="none" stroke="#1c9c1c" stroke-width="1.5"/>
<line x1="1060.3" y1="318.6" x2="1060.3" y2="405.9" stroke="#1c9c1c" stroke-width="1.5"/>
<text transform="translate(1027.8,330.9) scale(0.835,1)" font-size="11.7" font-weight="bold" stroke="#ffff1a" stroke-width="0.3" fill="#ffff1a">kV</text>
<text transform="translate(1064.1,330.9) scale(0.875,1)" font-size="11.7" font-weight="bold" stroke="#ffff1a" stroke-width="0.3" fill="#ffff1a">11.204</text>
<text transform="translate(1027.8,344.6) scale(0.835,1)" font-size="11.7" font-weight="bold" stroke="#ffff1a" stroke-width="0.3" fill="#ffff1a">A</text>
<text transform="translate(1064.1,344.6) scale(0.875,1)" font-size="11.7" font-weight="bold" stroke="#ffff1a" stroke-width="0.3" fill="#ffff1a">225.322</text>
<text transform="translate(1027.8,358.3) scale(0.835,1)" font-size="11.7" font-weight="bold" stroke="#ffff1a" stroke-width="0.3" fill="#ffff1a">MW</text>
<text transform="translate(1064.1,358.3) scale(0.875,1)" font-size="11.7" font-weight="bold" stroke="#ffff1a" stroke-width="0.3" fill="#ffff1a">4.24</text>
<text transform="translate(1027.8,373.4) scale(0.835,1)" font-size="11.7" font-weight="bold" stroke="#ffff1a" stroke-width="0.3" fill="#ffff1a">MWh</text>
<text transform="translate(1064.1,373.4) scale(0.875,1)" font-size="11.7" font-weight="bold" stroke="#ffff1a" stroke-width="0.3" fill="#ffff1a">000000.00</text>
<text transform="translate(1027.8,387.0) scale(0.835,1)" font-size="11.7" font-weight="bold" stroke="#ffff1a" stroke-width="0.3" fill="#ffff1a">kVAR</text>
<text transform="translate(1064.1,387.0) scale(0.875,1)" font-size="11.7" font-weight="bold" stroke="#ffff1a" stroke-width="0.3" fill="#ffff1a">1066.5</text>
<text transform="translate(1027.8,402.3) scale(0.835,1)" font-size="11.7" font-weight="bold" stroke="#ffff1a" stroke-width="0.3" fill="#ffff1a">P.F</text>
<text transform="translate(1064.1,402.3) scale(0.875,1)" font-size="11.7" font-weight="bold" stroke="#ffff1a" stroke-width="0.3" fill="#ffff1a">0.97</text>
<text x="1027.4" y="422.3" font-size="12.94" stroke="#eded3a" stroke-width="0.2" fill="#eded3a" textLength="73.3" lengthAdjust="spacingAndGlyphs">21-Apr-22 11:36</text>
<text x="380.6" y="446.4" font-size="11.63" font-weight="bold" stroke="#ffff1a" stroke-width="0.3" fill="#ffff1a" textLength="94.8" lengthAdjust="spacingAndGlyphs">STN T/F/ I/C METER</text>
<rect x="382.09999999999997" y="453.0" width="92.8" height="86.5" fill="none" stroke="#1c9c1c" stroke-width="1.5"/>
<line x1="419.1" y1="452.3" x2="419.1" y2="540.2" stroke="#1c9c1c" stroke-width="1.5"/>
<text transform="translate(386.7,464.3) scale(0.835,1)" font-size="11.7" font-weight="bold" stroke="#ffff1a" stroke-width="0.3" fill="#ffff1a">kV</text>
<text transform="translate(422.5,464.3) scale(0.875,1)" font-size="11.7" font-weight="bold" stroke="#ffff1a" stroke-width="0.3" fill="#ffff1a">6.609</text>
<text transform="translate(386.7,479.0) scale(0.835,1)" font-size="11.7" font-weight="bold" stroke="#ffff1a" stroke-width="0.3" fill="#ffff1a">A</text>
<text transform="translate(422.5,479.0) scale(0.875,1)" font-size="11.7" font-weight="bold" stroke="#ffff1a" stroke-width="0.3" fill="#ffff1a">143.383</text>
<text transform="translate(386.7,492.6) scale(0.835,1)" font-size="11.7" font-weight="bold" stroke="#ffff1a" stroke-width="0.3" fill="#ffff1a">MW</text>
<text transform="translate(422.5,492.6) scale(0.875,1)" font-size="11.7" font-weight="bold" stroke="#ffff1a" stroke-width="0.3" fill="#ffff1a">1.535</text>
<text transform="translate(386.7,507.1) scale(0.835,1)" font-size="11.7" font-weight="bold" stroke="#ffff1a" stroke-width="0.3" fill="#ffff1a">MWh</text>
<text transform="translate(422.5,507.1) scale(0.875,1)" font-size="11.7" font-weight="bold" stroke="#ffff1a" stroke-width="0.3" fill="#ffff1a">24.096</text>
<text transform="translate(386.7,520.8) scale(0.835,1)" font-size="11.7" font-weight="bold" stroke="#ffff1a" stroke-width="0.3" fill="#ffff1a">kVAR</text>
<text transform="translate(422.5,520.8) scale(0.875,1)" font-size="11.7" font-weight="bold" stroke="#ffff1a" stroke-width="0.3" fill="#ffff1a">-598.4</text>
<text transform="translate(386.7,536.2) scale(0.835,1)" font-size="11.7" font-weight="bold" stroke="#ffff1a" stroke-width="0.3" fill="#ffff1a">P.F</text>
<text transform="translate(422.5,536.2) scale(0.875,1)" font-size="11.7" font-weight="bold" stroke="#ffff1a" stroke-width="0.3" fill="#ffff1a">-0.926</text>
<text x="389.6" y="553.0" font-size="11.48" stroke="#eded3a" stroke-width="0.2" fill="#eded3a" textLength="72.4" lengthAdjust="spacingAndGlyphs">21-Apr-22 11:35</text>
<text x="791.6" y="445.4" font-size="11.63" font-weight="bold" stroke="#ffff1a" stroke-width="0.3" fill="#ffff1a" textLength="75.3" lengthAdjust="spacingAndGlyphs">GEN - 1 METER</text>
<rect x="782.4000000000001" y="452.3" width="92.5" height="87.4" fill="none" stroke="#1c9c1c" stroke-width="1.5"/>
<line x1="819.4" y1="451.6" x2="819.4" y2="540.4" stroke="#1c9c1c" stroke-width="1.5"/>
<text transform="translate(787.5,464.3) scale(0.835,1)" font-size="11.7" font-weight="bold" stroke="#ffff1a" stroke-width="0.3" fill="#ffff1a">kV</text>
<text transform="translate(823.7,464.3) scale(0.875,1)" font-size="11.7" font-weight="bold" stroke="#ffff1a" stroke-width="0.3" fill="#ffff1a">11.224</text>
<text transform="translate(787.5,478.4) scale(0.835,1)" font-size="11.7" font-weight="bold" stroke="#ffff1a" stroke-width="0.3" fill="#ffff1a">A</text>
<text transform="translate(823.7,478.4) scale(0.875,1)" font-size="11.7" font-weight="bold" stroke="#ffff1a" stroke-width="0.3" fill="#ffff1a">2652.3</text>
<text transform="translate(787.5,491.8) scale(0.835,1)" font-size="11.7" font-weight="bold" stroke="#ffff1a" stroke-width="0.3" fill="#ffff1a">MW</text>
<text transform="translate(823.7,491.8) scale(0.875,1)" font-size="11.7" font-weight="bold" stroke="#ffff1a" stroke-width="0.3" fill="#ffff1a">41.934</text>
<text transform="translate(787.5,506.1) scale(0.835,1)" font-size="11.7" font-weight="bold" stroke="#ffff1a" stroke-width="0.3" fill="#ffff1a">MWh</text>
<text transform="translate(823.7,506.1) scale(0.875,1)" font-size="11.7" font-weight="bold" stroke="#ffff1a" stroke-width="0.3" fill="#ffff1a">000000.00</text>
<text transform="translate(787.5,520.5) scale(0.835,1)" font-size="11.7" font-weight="bold" stroke="#ffff1a" stroke-width="0.3" fill="#ffff1a">kVAR</text>
<text transform="translate(823.7,520.5) scale(0.875,1)" font-size="11.7" font-weight="bold" stroke="#ffff1a" stroke-width="0.3" fill="#ffff1a">30125.5</text>
<text transform="translate(787.5,536.1) scale(0.835,1)" font-size="11.7" font-weight="bold" stroke="#ffff1a" stroke-width="0.3" fill="#ffff1a">P.F</text>
<text transform="translate(823.7,536.1) scale(0.875,1)" font-size="11.7" font-weight="bold" stroke="#ffff1a" stroke-width="0.3" fill="#ffff1a">0.811</text>
<text x="790.5" y="556.1" font-size="12.94" stroke="#eded3a" stroke-width="0.2" fill="#eded3a" textLength="73.4" lengthAdjust="spacingAndGlyphs">21-Apr-22 11:36</text>
<text x="1023.7" y="446.1" font-size="11.63" font-weight="bold" stroke="#ffff1a" stroke-width="0.3" fill="#ffff1a" textLength="89.3" lengthAdjust="spacingAndGlyphs">UAT - 1 I/C METER</text>
<rect x="1023.0" y="454.4" width="92.8" height="86.5" fill="none" stroke="#1c9c1c" stroke-width="1.5"/>
<line x1="1059.9" y1="453.7" x2="1059.9" y2="541.6" stroke="#1c9c1c" stroke-width="1.5"/>
<text transform="translate(1027.5,465.1) scale(0.835,1)" font-size="11.7" font-weight="bold" stroke="#ffff1a" stroke-width="0.3" fill="#ffff1a">kV</text>
<text transform="translate(1063.7,465.1) scale(0.875,1)" font-size="11.7" font-weight="bold" stroke="#ffff1a" stroke-width="0.3" fill="#ffff1a">5.858</text>
<text transform="translate(1027.5,480.1) scale(0.835,1)" font-size="11.7" font-weight="bold" stroke="#ffff1a" stroke-width="0.3" fill="#ffff1a">A</text>
<text transform="translate(1063.7,480.1) scale(0.875,1)" font-size="11.7" font-weight="bold" stroke="#ffff1a" stroke-width="0.3" fill="#ffff1a">0.383</text>
<text transform="translate(1027.5,494.0) scale(0.835,1)" font-size="11.7" font-weight="bold" stroke="#ffff1a" stroke-width="0.3" fill="#ffff1a">MW</text>
<text transform="translate(1063.7,494.0) scale(0.875,1)" font-size="11.7" font-weight="bold" stroke="#ffff1a" stroke-width="0.3" fill="#ffff1a">0</text>
<text transform="translate(1027.5,507.9) scale(0.835,1)" font-size="11.7" font-weight="bold" stroke="#ffff1a" stroke-width="0.3" fill="#ffff1a">MWh</text>
<text transform="translate(1063.7,507.9) scale(0.875,1)" font-size="11.7" font-weight="bold" stroke="#ffff1a" stroke-width="0.3" fill="#ffff1a">000000.00</text>
<text transform="translate(1027.5,521.6) scale(0.835,1)" font-size="11.7" font-weight="bold" stroke="#ffff1a" stroke-width="0.3" fill="#ffff1a">kVAR</text>
<text transform="translate(1063.7,521.6) scale(0.875,1)" font-size="11.7" font-weight="bold" stroke="#ffff1a" stroke-width="0.3" fill="#ffff1a">0.45</text>
<text transform="translate(1027.5,537.3) scale(0.835,1)" font-size="11.7" font-weight="bold" stroke="#ffff1a" stroke-width="0.3" fill="#ffff1a">P.F</text>
<text transform="translate(1063.7,537.3) scale(0.875,1)" font-size="11.7" font-weight="bold" stroke="#ffff1a" stroke-width="0.3" fill="#ffff1a">1</text>
<text x="1030.0" y="554.4" font-size="12.06" stroke="#eded3a" stroke-width="0.2" fill="#eded3a" textLength="73.1" lengthAdjust="spacingAndGlyphs">21-Apr-22 11:36</text>
</g>
</svg>
</body></html>
